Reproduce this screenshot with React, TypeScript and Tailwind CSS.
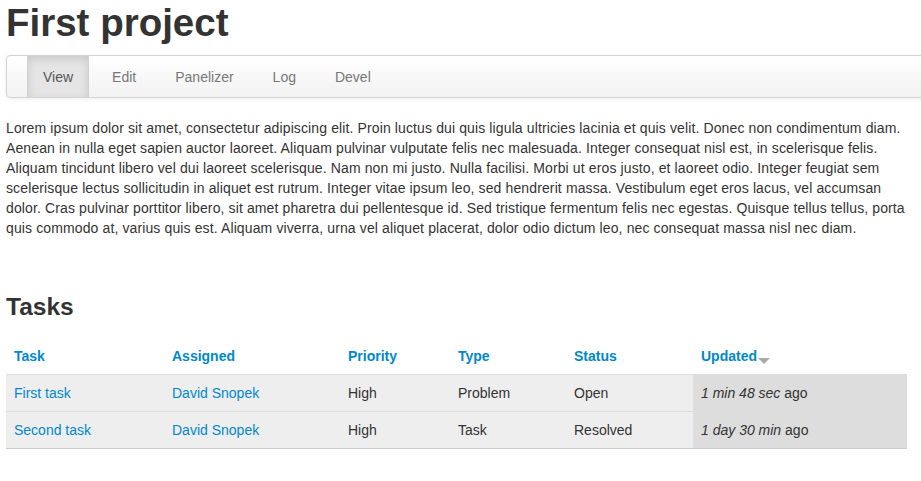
import React from "react"

const navItems = ["View", "Edit", "Panelizer", "Log", "Devel"]

const lorem =
  "Lorem ipsum dolor sit amet, consectetur adipiscing elit. Proin luctus dui quis ligula ultricies lacinia et quis velit. Donec non condimentum diam. Aenean in nulla eget sapien auctor laoreet. Aliquam pulvinar vulputate felis nec malesuada. Integer consequat nisl est, in scelerisque felis. Aliquam tincidunt libero vel dui laoreet scelerisque. Nam non mi justo. Nulla facilisi. Morbi ut eros justo, et laoreet odio. Integer feugiat sem scelerisque lectus sollicitudin in aliquet est rutrum. Integer vitae ipsum leo, sed hendrerit massa. Vestibulum eget eros lacus, vel accumsan dolor. Cras pulvinar porttitor libero, sit amet pharetra dui pellentesque id. Sed tristique fermentum felis nec egestas. Quisque tellus tellus, porta quis commodo at, varius quis est. Aliquam viverra, urna vel aliquet placerat, dolor odio dictum leo, nec consequat massa nisl nec diam."

const tasks = [
  { task: "First task", assigned: "David Snopek", priority: "High", type: "Problem", status: "Open", ago: "1 min 48 sec" },
  { task: "Second task", assigned: "David Snopek", priority: "High", type: "Task", status: "Resolved", ago: "1 day 30 min" },
]

const cols = ["w-[158px]", "w-[176px]", "w-[110px]", "w-[116px]", "w-[127px]", "w-[214px]"]

export default function App() {
  return (
    <div className="min-h-[481px] overflow-hidden bg-white pl-[6px] font-['Liberation_Sans',Arial,sans-serif] text-[14px] leading-[20px] text-[#333]">
      <h1 className="mt-[3px] text-[38.5px] font-bold leading-[40px] text-[#333]">First project</h1>

      {/* Tabs bar */}
      <div className="mt-[12px] mr-[-30px] flex h-[43px] items-stretch rounded-[4px] border border-[#d4d4d4] bg-gradient-to-b from-white to-[#f2f2f2] pl-[20px] shadow-[0_1px_4px_rgba(0,0,0,0.065)]">
        <div className="flex gap-[7px]">
          {navItems.map((item, i) => (
            <div
              key={item}
              className={
                i === 0
                  ? "flex items-center border-x border-[#d0d0d0] bg-[#e5e5e5] px-[15px] text-[#555] shadow-[inset_0_3px_8px_rgba(0,0,0,0.125)]"
                  : "flex items-center px-4 text-[#777]"
              }
            >
              {item}
            </div>
          ))}
        </div>
      </div>

      <div className="w-[901px]">
        <p className="mt-[20px] tracking-[0.12px]">{lorem}</p>

        <h3 className="mt-[49px] text-[24.5px] font-bold leading-[40px] text-[#333]">Tasks</h3>

        <table className="mt-[11px] w-[901px] border-collapse">
          <thead>
            <tr className="border-b border-[#ddd]">
              {["Task", "Assigned", "Priority", "Type", "Status", "Updated"].map((h, i) => (
                <th key={h} className={`${cols[i]} p-[8px] text-left font-bold text-[#0088cc]`}>
                  {h}
                  {h === "Updated" && (
                    <svg width="12" height="6" viewBox="0 0 12 6" className="ml-[1px] inline-block align-[-3px]">
                      <path d="M0 0h12L6 6z" fill="#aaa" />
                    </svg>
                  )}
                </th>
              ))}
            </tr>
          </thead>
          <tbody>
            {tasks.map((t, idx) => (
              <tr key={t.task} className={idx === tasks.length - 1 ? "border-b border-[#ccc] bg-[#eee]" : "border-b border-[#ddd] bg-[#eee]"}>
                <td className="p-[8px] text-[#0088cc]">{t.task}</td>
                <td className="p-[8px] text-[#0088cc]">{t.assigned}</td>
                <td className="p-[8px]">{t.priority}</td>
                <td className="p-[8px]">{t.type}</td>
                <td className="p-[8px]">{t.status}</td>
                <td className="bg-[#ddd] p-[8px]">
                  <em>{t.ago}</em> ago
                </td>
              </tr>
            ))}
          </tbody>
        </table>
      </div>
    </div>
  )
}
